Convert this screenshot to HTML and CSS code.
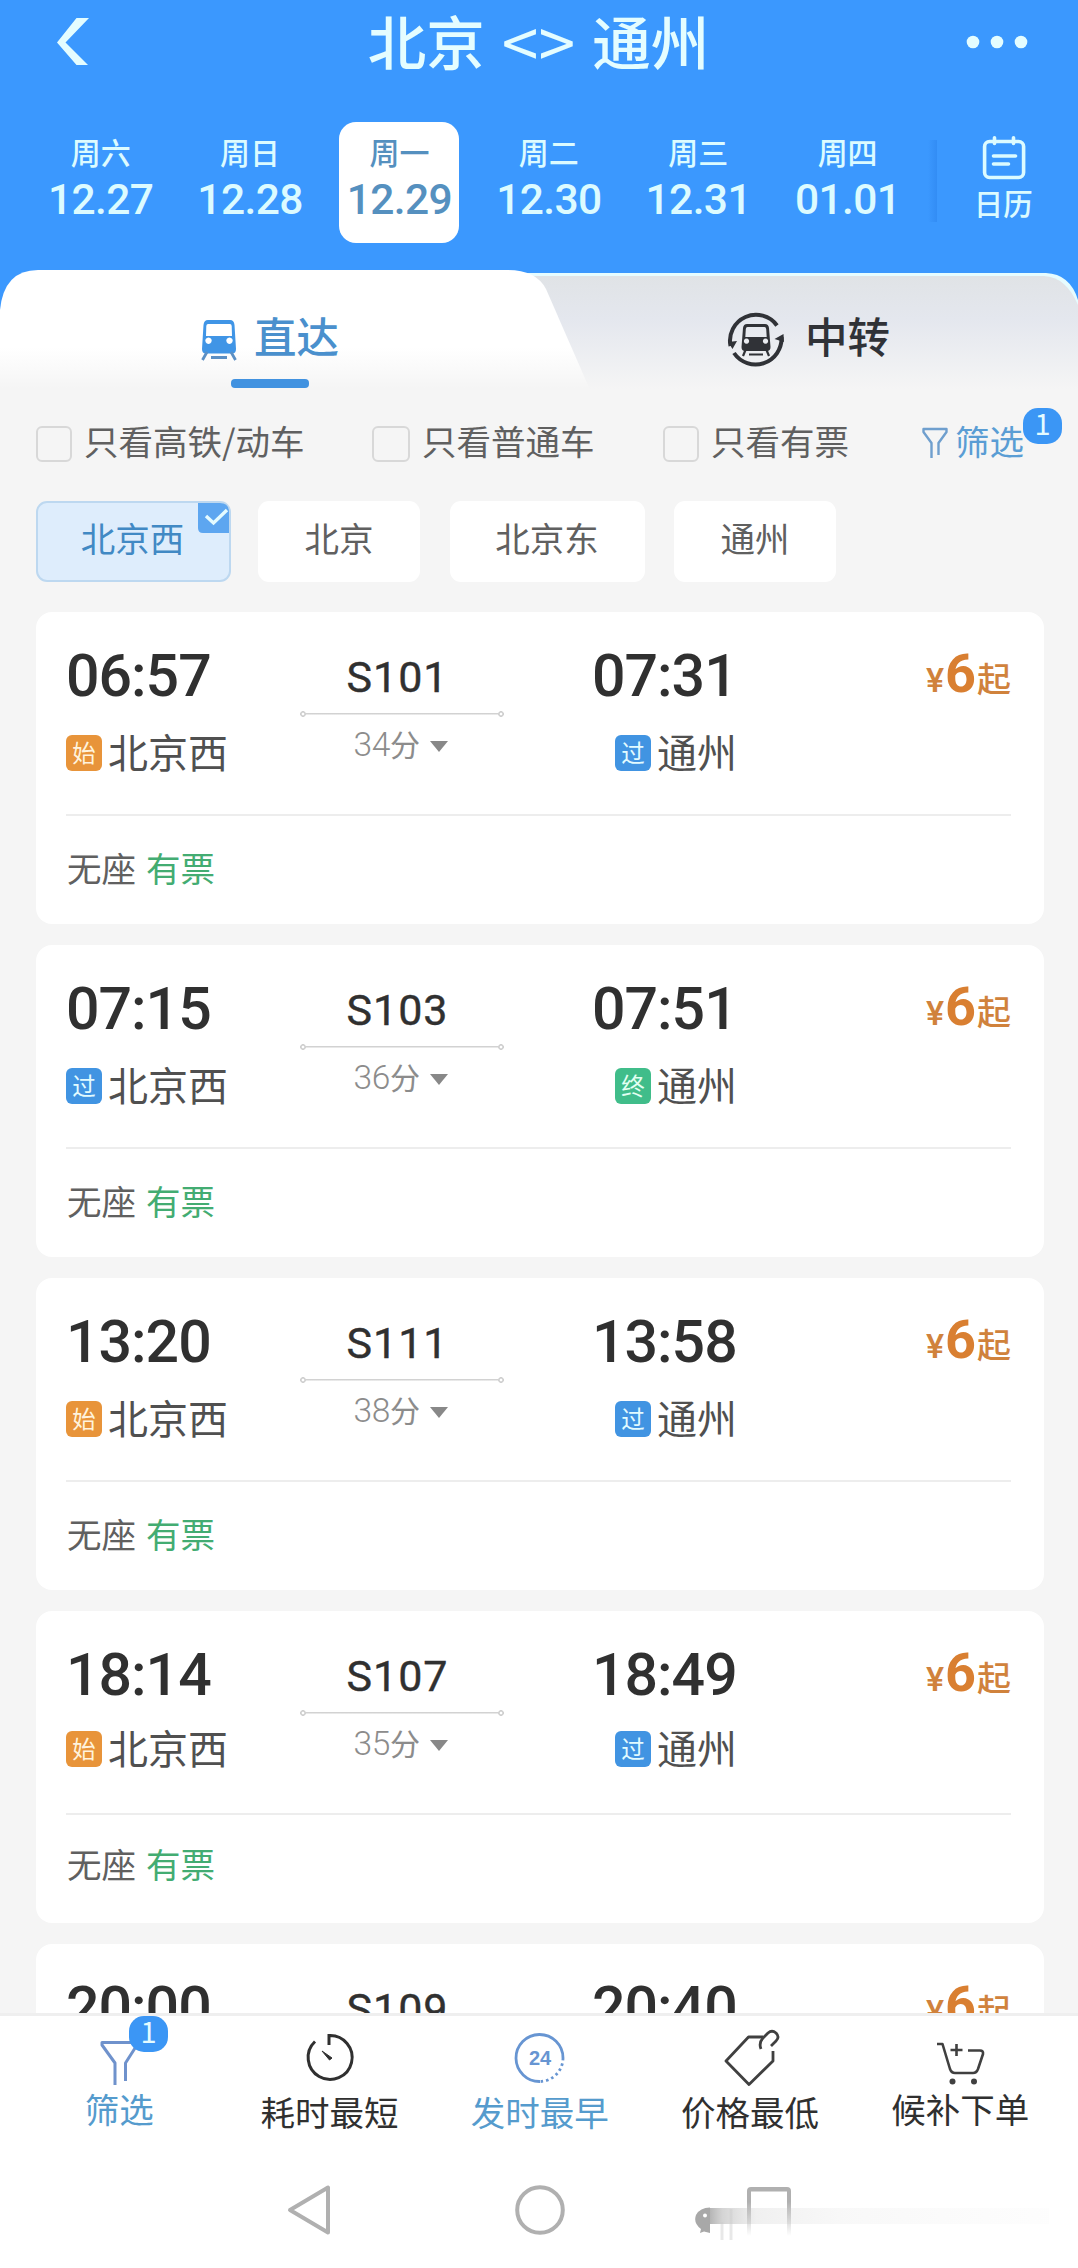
FILE: index.html
```html
<!DOCTYPE html>
<html lang="zh-CN">
<head>
<meta charset="utf-8">
<title>北京 - 通州</title>
<link rel="stylesheet" href="styles.css">
</head>
<body>
<div class="app">
  <header class="header">
    <div class="titlebar">
      <svg class="back" width="34" height="50" viewBox="0 0 34 50"><path d="M20.500 0H33L9.500 24.500L32 47H20.500L1 24.500Z" fill="#e4fdff"/></svg>
      <h1 class="title"><span>北京</span><span class="swap">&lt;&gt;</span><span>通州</span></h1>
      <svg class="more" width="62" height="14" viewBox="0 0 62 14" fill="#e4fdff"><circle cx="7" cy="7" r="6.300"/><circle cx="31" cy="7" r="6.300"/><circle cx="55" cy="7" r="6.300"/></svg>
    </div>
    <div class="dates">
      <div class="date"><span class="wk">周六</span><span class="dt">12.27</span></div>
      <div class="date"><span class="wk">周日</span><span class="dt">12.28</span></div>
      <div class="date on"><span class="wk">周一</span><span class="dt">12.29</span></div>
      <div class="date"><span class="wk">周二</span><span class="dt">12.30</span></div>
      <div class="date"><span class="wk">周三</span><span class="dt">12.31</span></div>
      <div class="date"><span class="wk">周四</span><span class="dt">01.01</span></div>
      <div class="calendar">
        <svg width="44" height="44" viewBox="0 0 44 44" fill="none" stroke="#dcfbff" stroke-width="3.600" stroke-linecap="round"><rect x="2.600" y="5.500" width="39" height="36" rx="5"/><path d="M12.500 1.800V7.500M31.500 1.800V7.500M11.500 20H33.500M11.500 28H26.500"/></svg>
        <span>日历</span>
      </div>
    </div>
  </header>

  <nav class="tabs">
    <svg class="tabs-bg" width="1078" height="130" viewBox="0 0 1078 130">
      <defs>
        <linearGradient id="gr" x1="0" y1="0" x2="0" y2="1"><stop offset="0" stop-color="#e0e3e6"/><stop offset=".35" stop-color="#e4e7ee"/><stop offset=".92" stop-color="#f5f5f5"/></linearGradient>
        <linearGradient id="gl" x1="0" y1="0" x2="0" y2="1"><stop offset="0" stop-color="#fff"/><stop offset=".6" stop-color="#fff"/><stop offset=".92" stop-color="#f5f5f5"/></linearGradient>
      </defs>
      <path d="M400 4H1046Q1070 5 1078 31V130H400Z" fill="#e6fcff"/>
      <path d="M400 7H1044Q1066 8 1078 36V130H400Z" fill="url(#gr)"/>
      <path d="M0 130V41Q4 1 38 1H508Q536 1 546 20L594 130Z" fill="url(#gl)"/>
    </svg>
    <div class="tab active">
      <svg width="38" height="42" viewBox="0 0 38 42"><path fill="#4095e6" fill-rule="evenodd" d="M8 1H30Q34 1 34.500 6L36 30Q36 34.500 32 34.500H6Q2 34.500 2 30L3.500 6Q4 1 8 1ZM8 5Q6.500 5 6.300 7L6 17H32L31.700 7Q31.500 5 30 5ZM8.500 18.500a3.200 3.200 0 1 0 .01 0ZM29.500 18.500a3.200 3.200 0 1 0 .01 0Z"/><path d="M7 33L2.500 41M31 33L35.500 41M11 38.500H27" stroke="#5b8fc4" stroke-width="2.800" fill="none"/></svg>
      <span>直达</span>
      <i class="underline"></i>
    </div>
    <div class="tab">
      <svg width="58" height="58" viewBox="0 0 58 58"><path d="M3.500 35A26 26 0 0 1 50 14.500M54.500 26A26 26 0 0 1 7 42" fill="none" stroke="#303237" stroke-width="4"/><path d="M1 31L10 30L5.500 38ZM56.500 23L57 31L47.500 28Z" fill="#303237"/><path fill="#303237" fill-rule="evenodd" d="M20 13H38Q41.500 13 42 17L43.500 36Q43.500 40 40 40H18Q14.500 40 14.500 36L16 17Q16.500 13 20 13ZM20.500 16Q19 16 18.800 18L18.300 26H39.700L39.200 18Q39 16 37.500 16ZM19.500 27.500a2.600 2.600 0 1 0 .01 0ZM38.500 27.500a2.600 2.600 0 1 0 .01 0Z"/><path d="M18.500 39L16 45M39.500 39L42 45M22 43.500H36" stroke="#303237" stroke-width="2.200" fill="none"/></svg>
      <span>中转</span>
    </div>
  </nav>

  <section class="filters">
    <label class="check c1"><i></i>只看高铁/动车</label>
    <label class="check c2"><i></i>只看普通车</label>
    <label class="check c3"><i></i>只看有票</label>
    <div class="filter-btn">
      <svg width="26" height="32" viewBox="0 0 26 32" fill="none" stroke="#6f9fce" stroke-width="2.400" stroke-linejoin="round"><path d="M9.500 31V16L1.500 5V2H24.500V5L16.500 16V28"/></svg>
      <span>筛选</span><b class="badge">1</b>
    </div>
  </section>

  <section class="chips">
    <div class="chip three sel">北京西<svg class="tick" width="31" height="30" viewBox="0 0 31 30"><path d="M0 0H22Q31 0 31 9V30H5Q0 30 0 25Z" fill="#5da6f0"/><path d="M8 13L15.500 20L29 7" fill="none" stroke="#e4fbff" stroke-width="3.400"/></svg></div>
    <div class="chip second">北京</div>
    <div class="chip three">北京东</div>
    <div class="chip">通州</div>
  </section>

  <main class="list">
    <article class="card">
      <div class="trip">
        <div class="stop"><time>06:57</time><p><em class="tag start">始</em>北京西</p></div>
        <div class="mid"><strong>S101</strong><i class="rail"></i><span>34<b>分</b></span></div>
        <div class="stop to"><time>07:31</time><p><em class="tag pass">过</em>通州</p></div>
        <div class="price"><small>¥</small><b>6</b><span>起</span></div>
      </div>
      <div class="seat">无座<span>有票</span></div>
    </article>
    <article class="card">
      <div class="trip">
        <div class="stop"><time>07:15</time><p><em class="tag pass">过</em>北京西</p></div>
        <div class="mid"><strong>S103</strong><i class="rail"></i><span>36<b>分</b></span></div>
        <div class="stop to"><time>07:51</time><p><em class="tag end">终</em>通州</p></div>
        <div class="price"><small>¥</small><b>6</b><span>起</span></div>
      </div>
      <div class="seat">无座<span>有票</span></div>
    </article>
    <article class="card">
      <div class="trip">
        <div class="stop"><time>13:20</time><p><em class="tag start">始</em>北京西</p></div>
        <div class="mid"><strong>S111</strong><i class="rail"></i><span>38<b>分</b></span></div>
        <div class="stop to"><time>13:58</time><p><em class="tag pass">过</em>通州</p></div>
        <div class="price"><small>¥</small><b>6</b><span>起</span></div>
      </div>
      <div class="seat">无座<span>有票</span></div>
    </article>
    <article class="card tight">
      <div class="trip">
        <div class="stop"><time>18:14</time><p><em class="tag start">始</em>北京西</p></div>
        <div class="mid"><strong>S107</strong><i class="rail"></i><span>35<b>分</b></span></div>
        <div class="stop to"><time>18:49</time><p><em class="tag pass">过</em>通州</p></div>
        <div class="price"><small>¥</small><b>6</b><span>起</span></div>
      </div>
      <div class="seat">无座<span>有票</span></div>
    </article>
    <article class="card last">
      <div class="trip">
        <div class="stop"><time>20:00</time></div>
        <div class="mid"><strong>S109</strong></div>
        <div class="stop to"><time>20:40</time></div>
        <div class="price"><small>¥</small><b>6</b><span>起</span></div>
      </div>
    </article>
  </main>

  <footer class="bottom">
    <div class="sort">
      <div class="item blue up">
        <svg width="56" height="60" viewBox="0 0 56 60" fill="none" stroke="#6f92cc" stroke-width="3" stroke-linejoin="round"><path d="M24 59V37L11 19V16.500H46V19L34.500 37V55"/></svg>
        <span>筛选</span><b class="badge">1</b>
      </div>
      <div class="item">
        <svg width="56" height="60" viewBox="0 0 56 60" fill="none" stroke="#303030" stroke-width="3"><path d="M14 15.500A22 22 0 1 0 28 9.500V19"/><path d="M21 25L31 32L28.500 34Z" fill="#303030" stroke-width="1"/></svg>
        <span>耗时最短</span>
      </div>
      <div class="item blue">
        <svg width="56" height="60" viewBox="0 0 56 60" fill="none" stroke="#6795d2" stroke-width="2.800"><path d="M51 32A23.500 23.500 0 1 0 28 55.500"/><path d="M51 32A23.500 23.500 0 0 1 28 55.500" stroke-dasharray="2.500 3"/><text x="28" y="38.500" text-anchor="middle" class="n24">24</text></svg>
        <span>发时最早</span>
      </div>
      <div class="item">
        <svg width="60" height="60" viewBox="0 0 60 60" fill="none" stroke="#404040" stroke-width="2.800" stroke-linejoin="round"><path d="M43 11H28.500L6 35L29 58.500L53 35V25"/><path d="M41 23Q38.500 17 43 12L48 7Q52 3.500 56 7Q60 11 56 15L51 20"/></svg>
        <span>价格最低</span>
      </div>
      <div class="item up">
        <svg width="56" height="60" viewBox="0 0 56 60" fill="none" stroke="#404040" stroke-width="2.600" stroke-linejoin="round"><path d="M5 18H10.500L18 43Q19.500 47 23 47H41Q44.500 47 46 43L51 28Q51.500 24.500 48 24.500H36M24.500 18V30M18.500 24H30.500"/><g fill="#404040" stroke="none"><circle cx="20.500" cy="55.500" r="3"/><circle cx="42" cy="55.500" r="3"/></g></svg>
        <span>候补下单</span>
      </div>
    </div>
    <div class="sysnav">
      <svg width="44" height="52" viewBox="0 0 44 52"><path d="M41 3.500V48.500L3 26Z" fill="none" stroke="#b0b0b0" stroke-width="4" stroke-linejoin="round"/></svg>
      <svg width="50" height="52" viewBox="0 0 50 52"><circle cx="25" cy="26" r="22.800" fill="none" stroke="#b0b0b0" stroke-width="4"/></svg>
      <div class="recent">
        <svg width="46" height="52" viewBox="0 0 46 52"><defs><linearGradient id="fd" x1="0" y1="0" x2="0" y2="1"><stop offset="0" stop-color="#b0b0b0"/><stop offset=".3" stop-color="#b0b0b0"/><stop offset="1" stop-color="#b0b0b0" stop-opacity="0"/></linearGradient></defs><path d="M1 52V7Q1 3 5 3H41Q45 3 45 7V52H41V7.500H5V52Z" fill="url(#fd)"/></svg>
        <svg class="smear" width="356" height="36" viewBox="0 0 356 36"><defs><linearGradient id="sm" x1="0" y1="0" x2="1" y2="0"><stop offset="0" stop-color="#999" stop-opacity=".75"/><stop offset=".04" stop-color="#aaa" stop-opacity=".5"/><stop offset=".14" stop-color="#bbb" stop-opacity=".22"/><stop offset=".4" stop-color="#ccc" stop-opacity=".13"/><stop offset="1" stop-color="#eee" stop-opacity=".1"/></linearGradient></defs><rect x="14" y="2" width="340" height="16" fill="url(#sm)"/><path d="M15 1.500Q5 1.500 1 9Q-2 17 6 23L5 27L9 25.500L15 27Z" fill="#a8a8a8"/><circle cx="10" cy="9.500" r="2" fill="#fff"/><path d="M27 16V34M36 3V34" stroke="#ccc" stroke-opacity=".45" stroke-width="3"/></svg>
      </div>
    </div>
  </footer>
</div>
</body>
</html>
```
FILE: styles.css
```css
* { box-sizing: border-box; margin: 0; padding: 0; }
html, body { width: 1078px; height: 2268px; overflow: hidden; }
body { background: #f5f5f5; font-family: "Noto Sans CJK SC", sans-serif; color: #303030; }
i, em { font-style: normal; }
svg { display: block; flex: none; }

.app { height: 2268px; display: flex; flex-direction: column; }

/* header */
.header { height: 269px; flex: none; background: #3b98fe; }
.header::after { content: ""; display: block; height: 60px; background: #3b98fe; }
.titlebar { height: 122px; padding: 18px 50px 0 56px; display: flex; justify-content: space-between; align-items: flex-start; color: #e4fdff; }
.title { display: flex; gap: 17px; margin: -18px 0 0 21px; font-size: 58.500px; line-height: 80px; font-weight: 500; }
.swap { font-size: 66px; font-weight: 400; line-height: 78px; }
.more { margin-top: 17px; }
.dates { display: flex; padding-left: 26px; height: 147px; }
.date { width: 149.400px; display: flex; flex-direction: column; align-items: center; padding-top: 8px; color: #dcfbff; }
.date.on { width: 120px; height: 121px; margin: 0 14.700px; background: #fff; border-radius: 17px; color: #5590bf; }
.wk { font-size: 30px; line-height: 42px; font-weight: 500; }
.dt { font-family: Roboto, sans-serif; font-size: 42.500px; line-height: 50px; font-weight: 500; white-space: nowrap; margin-top: 3px; letter-spacing: -.6px; }
.calendar { flex: 1; display: flex; flex-direction: column; align-items: center; padding: 14px 0 0; margin-left: 6px; height: 110px; color: #dcfbff; font-size: 29.500px; font-weight: 500; line-height: 42px; background: linear-gradient(90deg, rgba(20, 100, 210, 0), rgba(20, 100, 210, .22)) 0 18px / 9px 82px no-repeat; }
.calendar svg { margin-left: 2px; }
.calendar span { margin-top: 1px; }

/* tabs */
.tabs { position: relative; height: 130px; flex: none; display: flex; background: linear-gradient(#3b98fe 50px, #f5f5f5 50px); }
.tabs-bg { position: absolute; left: 0; top: 0; }
.tab { position: relative; width: 539px; height: 130px; display: flex; align-items: flex-start; justify-content: center; font-size: 42.500px; font-weight: 500; gap: 16px; line-height: 62px; color: #303237; }
.tab > svg { margin-top: 50px; }
.tab > span { margin-top: 35px; }
.tab:last-child { gap: 20px; }
.tab:last-child > svg { margin-top: 42px; }
.tab.active { color: #4a90cd; }
.underline { position: absolute; left: 231px; top: 110px; width: 78px; height: 9px; border-radius: 4px; background: #4192e0; }

/* quick filters */
.filters { height: 102px; flex: none; padding: 14px 0 0 36px; display: flex; align-items: flex-start; font-size: 34.500px; line-height: 54px; color: #606060; }
.check { display: flex; white-space: nowrap; }
.check i { width: 36px; height: 36px; margin: 13px 12px 0 0; border: 2.500px solid #d8d8d8; border-radius: 6px; }
.c1 { width: 336px; }
.c2 { width: 291px; }
.c2 i { width: 38px; }
.c3 { width: 259px; }
.filter-btn { position: relative; display: flex; gap: 7px; color: #5a9dd4; }
.filter-btn svg { margin-top: 14px; }
.badge { position: absolute; width: 39px; height: 36px; border-radius: 15px; background: #3b96f5; color: #e4fbff; font: 400 29px/29px "Noto Sans CJK SC", sans-serif; text-align: center; }
.filter-btn .badge { left: 101px; top: -5px; }

/* station chips */
.chips { display: flex; gap: 29.500px; padding-left: 36px; height: 111px; flex: none; font-size: 34.500px; color: #606060; }
.chip { position: relative; width: 162px; height: 81px; border-radius: 11px; background: #fff; text-align: center; line-height: 73px; }
.chip.three { width: 195px; }
.chip.second { margin-left: -2.500px; }
.chip.sel { background: #deedfc; border: 2.500px solid #bdd8f0; color: #4189c4; line-height: 69px; padding-right: 2px; }
.tick { position: absolute; right: 0; top: 0; }

/* trains */
.list { flex: 1; overflow: hidden; padding: 0 34px 0 36px; display: flex; flex-direction: column; gap: 21px; }
.card { height: 312px; flex: none; background: #fff; border-radius: 16px; padding: 0 33px 0 30px; }
.trip { display: grid; grid-template-columns: 234px 204px 270px 1fr; height: 204px; border-bottom: 2px solid #ededed; }
time { display: block; font: 500 59px/70px Roboto, sans-serif; margin: 28.500px 0 0; letter-spacing: -1px; }
.to { padding-left: 90px; width: 290px; }
.to time { margin-left: -2px; }
.to p { padding-left: 21px; width: 210px; }
.stop p { display: flex; align-items: center; gap: 6px; margin-top: 10.500px; height: 60px; font-size: 40px; color: #505050; white-space: nowrap; line-height: 60px; }
.tag { width: 36px; height: 36px; margin-top: 3px; border-radius: 6px; color: #fff3dd; font-size: 23.500px; line-height: 34px; text-align: center; }
.start { background: #e8943a; }
.pass { background: #4194e2; color: #e2fbff; }
.end { background: #40bd8a; color: #e2fff2; }
.mid { display: flex; flex-direction: column; align-items: center; }
.mid strong { font: 400 43px/50px Roboto, sans-serif; margin: 40px 0 0 -9px; letter-spacing: 1px; -webkit-text-stroke: .4px currentColor; }
.rail { width: 204px; height: 6px; margin-top: 9px; background: linear-gradient(#d2d2d2, #d2d2d2) center / 194px 1.500px no-repeat, radial-gradient(circle at 3px 3px, #fff 1.500px, #cfcfcf 1.600px 2.800px, transparent 3px) left / 6px 6px no-repeat, radial-gradient(circle at 3px 3px, #fff 1.500px, #cfcfcf 1.600px 2.800px, transparent 3px) right / 6px 6px no-repeat; }
.mid span { display: flex; align-items: center; margin: 3px 0 0 -2px; font: 300 33.500px/50px Roboto, sans-serif; letter-spacing: -.4px; color: #8c8c8c; }
.mid span b { font: 400 30px/46px "Noto Sans CJK SC", sans-serif; height: 50px; }
.mid span::after { content: ""; border: 9px solid transparent; border-top: 11px solid #888; border-bottom: 0; margin: 3px 0 0 11px; }
.price { display: flex; justify-content: flex-end; align-items: baseline; height: 94px; padding-top: 32px; color: #d0823c; white-space: nowrap; }
.price small { font: 500 34px/50px Roboto, sans-serif; }
.price b { font: 700 54px/60px Roboto, sans-serif; margin: 0 1px; color: #d97f31; }
.price span { font-size: 34px; font-weight: 500; line-height: 50px; }
.seat { display: flex; gap: 10px; padding: 26px 0 0 1px; font-size: 34.500px; line-height: 50px; color: #606060; }
.seat span { color: #43ac72; }
.tight .stop p { margin-top: 7.500px; }
.tight .seat { padding-top: 23px; }

/* bottom bar */
.bottom { height: 255px; flex: none; border-top: 3px solid #efefef; background: #fff; }
.sort { display: flex; height: 154px; padding-left: 14px; }
.item { position: relative; width: 210.300px; display: flex; flex-direction: column; align-items: center; padding-top: 10px; font-size: 34.500px; line-height: 50px; }
.up span { margin-top: -3px; }
.blue { color: #559bcd; }
.item .badge { left: 115px; top: 0; }
.n24 { font: 700 20px "Liberation Sans", sans-serif; fill: #6795d2; stroke: none; }
.sysnav { display: flex; padding: 14px 0 0 287px; height: 90px; }
.sysnav > svg:nth-child(2) { margin-left: 184px; }
.recent { position: relative; margin-left: 181px; }
.smear { position: absolute; left: -51px; top: 22px; }
```
